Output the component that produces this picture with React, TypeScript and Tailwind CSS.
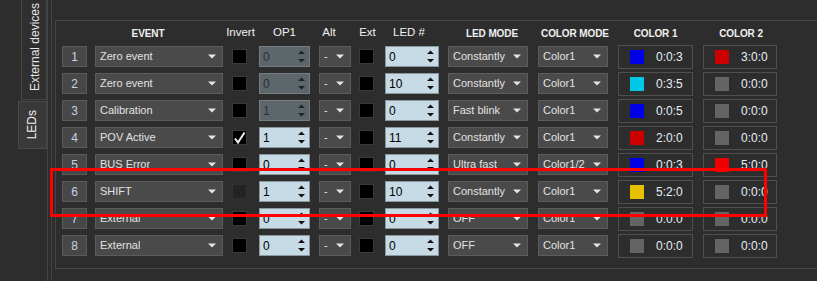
import clsx from 'clsx';

type Led = {
  n: number;
  event: string;
  invert: 'off' | 'on' | 'dim';
  op1: string;
  op1Off?: boolean;
  led: string;
  mode: string;
  colorMode: string;
  c1: string;
  c1v: string;
  c2: string;
  c2v: string;
};

const GRAY = 'bg-[#646464]';

const leds: Led[] = [
  { n: 1, event: 'Zero event', invert: 'off', op1: '0', op1Off: true, led: '0', mode: 'Constantly', colorMode: 'Color1', c1: 'bg-[#0000e6]', c1v: '0:0:3', c2: 'bg-[#cc0000]', c2v: '3:0:0' },
  { n: 2, event: 'Zero event', invert: 'off', op1: '0', op1Off: true, led: '10', mode: 'Constantly', colorMode: 'Color1', c1: 'bg-[#00c8e6]', c1v: '0:3:5', c2: GRAY, c2v: '0:0:0' },
  { n: 3, event: 'Calibration', invert: 'off', op1: '1', op1Off: true, led: '0', mode: 'Fast blink', colorMode: 'Color1', c1: 'bg-[#0000e6]', c1v: '0:0:5', c2: GRAY, c2v: '0:0:0' },
  { n: 4, event: 'POV Active', invert: 'on', op1: '1', led: '11', mode: 'Constantly', colorMode: 'Color1', c1: 'bg-[#cc0000]', c1v: '2:0:0', c2: GRAY, c2v: '0:0:0' },
  { n: 5, event: 'BUS Error', invert: 'off', op1: '0', led: '0', mode: 'Ultra fast', colorMode: 'Color1/2', c1: 'bg-[#0000e6]', c1v: '0:0:3', c2: 'bg-[#ee0000]', c2v: '5:0:0' },
  { n: 6, event: 'SHIFT', invert: 'dim', op1: '1', led: '10', mode: 'Constantly', colorMode: 'Color1', c1: 'bg-[#e6c000]', c1v: '5:2:0', c2: GRAY, c2v: '0:0:0' },
  { n: 7, event: 'External', invert: 'off', op1: '0', led: '0', mode: 'OFF', colorMode: 'Color1', c1: GRAY, c1v: '0:0:0', c2: GRAY, c2v: '0:0:0' },
  { n: 8, event: 'External', invert: 'off', op1: '0', led: '0', mode: 'OFF', colorMode: 'Color1', c1: GRAY, c1v: '0:0:0', c2: GRAY, c2v: '0:0:0' },
];

function DropArrow() {
  return (
    <svg width="8" height="5" viewBox="0 0 8 5" className="shrink-0">
      <path d="M0 0.5h8L4 4.5z" fill="#e4e4e4" />
    </svg>
  );
}

function Select({ value, w }: { value: string; w: string }) {
  return (
    <div
      className={clsx(
        'h-[21px] flex items-center justify-between pl-[4px] pr-[6px] bg-[#4a4a4a] border border-[#5c5c5c] text-[11px] text-[#e2e2e2]',
        w,
      )}
    >
      <span className="truncate">{value}</span>
      <DropArrow />
    </div>
  );
}

function Spin({ value, w, off }: { value: string; w: string; off?: boolean }) {
  return (
    <div
      className={clsx(
        'h-[21px] flex items-center justify-between pl-[3px] pr-[4px] border text-[12px]',
        off ? 'bg-[#5d666b] border-[#757d82] text-[#2b3034]' : 'bg-[#c6dbe5] border-[#8a989e] text-black',
        w,
      )}
    >
      <span>{value}</span>
      <svg width="7" height="13" viewBox="0 0 7 13" className="shrink-0">
        <path d="M0 4L3.5 0.5 7 4z M0 9h7L3.5 12.5z" fill={off ? '#1e2326' : '#111'} />
      </svg>
    </div>
  );
}

function Check({ state, className }: { state: 'off' | 'on' | 'dim'; className?: string }) {
  return (
    <div
      className={clsx(
        'w-[15px] h-[15px] border flex items-center justify-center',
        state === 'dim' ? 'bg-[#232323] border-[#303030]' : 'bg-black border-[#3a3a3a]',
        className,
      )}
    >
      {state === 'on' && (
        <svg width="13" height="13" viewBox="0 0 13 13">
          <path d="M2 7.5L5 11.5L11.5 1.5" fill="none" stroke="#f2f2f2" strokeWidth="2" />
        </svg>
      )}
    </div>
  );
}

function ColorBox({ swatch, value, w, className }: { swatch: string; value: string; w: string; className?: string }) {
  return (
    <div className={clsx('h-[24px] border border-[#4f4f4f] flex items-center pl-[11px] gap-[12px]', w, className)}>
      <div className={clsx('w-[14px] h-[14px]', swatch)} />
      <span className="text-[12px] text-[#e6eef8]">{value}</span>
    </div>
  );
}

function Header({ label, w, className, shift, caps }: { label: string; w: string; className?: string; shift?: string; caps?: boolean }) {
  return (
    <div className={clsx('flex justify-center whitespace-nowrap', w, className)}>
      <span className={clsx(caps ? 'text-[10px] font-bold tracking-[-0.1px]' : 'text-[11.5px]', shift)}>{label}</span>
    </div>
  );
}

export default function App() {
  return (
    <div
      className="relative w-[817px] h-[281px] overflow-hidden bg-[#2d2d2d] flex text-[#f0f0f0] select-none"
      style={{ fontFamily: '"Liberation Sans", Arial, sans-serif' }}
    >
      {/* Vertical tab bar */}
      <div className="w-[48px] h-full border-r border-[#444] flex flex-col items-end shrink-0">
        <div className="w-[26px] h-[100px] bg-[#2f2f2f] border border-t-0 border-[#454545] flex flex-col items-center justify-end pb-[8px] pl-[1px]">
          <span className="[writing-mode:vertical-rl] rotate-180 text-[12px] text-[#e6e6e6] leading-none">External devices</span>
        </div>
        <div className="w-[29px] h-[48px] mt-[1px] bg-[#393939] border border-[#4a4a4a] flex items-center justify-center pr-[2px]">
          <span className="[writing-mode:vertical-rl] rotate-180 text-[12px] text-[#f0f0f0] leading-none">LEDs</span>
        </div>
      </div>

      {/* Tab pane */}
      <div className="ml-[3px] h-full border-l border-[#444] pl-[3px] pt-[20px] shrink-0">
        <div className="w-[790px] h-[249px] border-t border-l border-b border-[#464646] pl-[6px]">
          <div className="h-[22px] pt-[2px] flex items-center">
            <div className="w-[25px]" />
            <Header label="EVENT" w="w-[128px]" className="ml-[8px]" shift="-translate-x-[11px]" caps />
            <Header label="Invert" w="w-[15px]" className="ml-[9px]" shift="translate-x-[1px]" />
            <Header label="OP1" w="w-[51px]" className="ml-[12px]" />
            <Header label="Alt" w="w-[32px]" className="ml-[9px]" shift="-translate-x-[6px]" />
            <Header label="Ext" w="w-[15px]" className="ml-[8px]" shift="translate-x-[1px]" />
            <Header label="LED #" w="w-[54px]" className="ml-[11px]" shift="-translate-x-[3px]" />
            <Header label="LED MODE" w="w-[80px]" className="ml-[9px]" shift="translate-x-[4px]" caps />
            <Header label="COLOR MODE" w="w-[70px]" className="ml-[10px]" shift="translate-x-[2px]" caps />
            <Header label="COLOR 1" w="w-[75px]" className="ml-[10px]" caps />
            <Header label="COLOR 2" w="w-[74px]" className="ml-[10px]" shift="translate-x-[1px]" caps />
          </div>

          {leds.map((r) => (
            <div key={r.n} className="h-[27px] flex items-center">
              <div className="w-[25px] h-[21px] bg-[#474747] border border-[#5a5a5a] flex items-center justify-center text-[12px] text-[#c4d4e6]">
                {r.n}
              </div>
              <div className="ml-[8px]">
                <Select value={r.event} w="w-[128px]" />
              </div>
              <Check state={r.invert} className="ml-[9px]" />
              <div className="ml-[12px]">
                <Spin value={r.op1} w="w-[51px]" off={r.op1Off} />
              </div>
              <div className="ml-[9px]">
                <Select value="-" w="w-[32px]" />
              </div>
              <Check state="off" className="ml-[8px]" />
              <div className="ml-[11px]">
                <Spin value={r.led} w="w-[54px]" />
              </div>
              <div className="ml-[9px]">
                <Select value={r.mode} w="w-[80px]" />
              </div>
              <div className="ml-[10px]">
                <Select value={r.colorMode} w="w-[70px]" />
              </div>
              <ColorBox swatch={r.c1} value={r.c1v} w="w-[75px]" className="ml-[10px]" />
              <ColorBox swatch={r.c2} value={r.c2v} w="w-[74px]" className="ml-[10px]" />
            </div>
          ))}
        </div>
      </div>

      {/* Highlight annotation */}
      <div className="absolute left-[50px] top-[168px] w-[717px] h-[49px] border-[3px] border-[#ff0000] pointer-events-none" />
    </div>
  );
}
